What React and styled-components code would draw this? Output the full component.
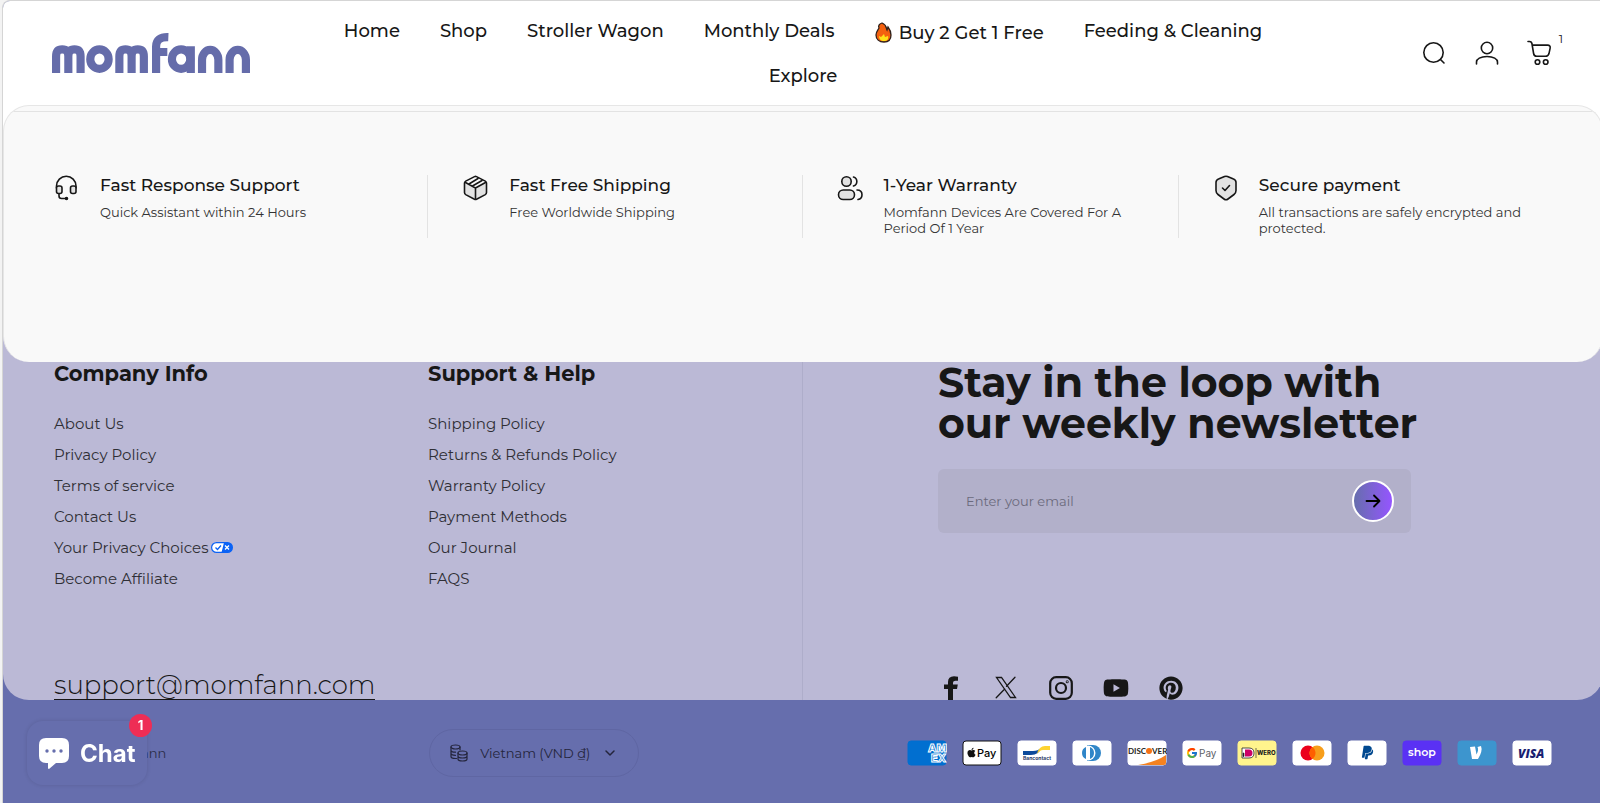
import styled, { createGlobalStyle } from "styled-components"
import { FaPinterest, FaYoutube, FaApple, FaPaypal } from "react-icons/fa"
import { FcGoogle } from "react-icons/fc"

const GlobalStyle = createGlobalStyle`
    * {
        box-sizing: border-box;
    }
    body {
        margin: 0;
        background-color: #f3f3f3;
        color: #171717;
        font-family: Montserrat, Inter, sans-serif;
        overflow: hidden;
    }
    a {
        color: inherit;
        text-decoration: none;
    }
    h2, h3, p, ul {
        margin: 0;
        padding: 0;
    }
    svg {
        display: block;
    }
`

const Page = styled.div`
    margin: 0 -3px 0 2px;
    border-top: 1px solid #d5d5d5;
    border-left: 1px solid #d5d5d5;
    border-top-left-radius: 8px;
    background-color: #666ead;
    min-height: 100vh;
    overflow: hidden;
`

const HeaderBar = styled.header`
    display: grid;
    grid-template-columns: 1fr 1000px 1fr;
    align-items: center;
    height: 104px;
    padding: 0 49px;
    background-color: white;
`

const Logo = styled.a`
    svg {
        width: 198px;
        height: 42px;
    }
`

const Nav = styled.nav`
    display: flex;
    flex-wrap: wrap;
    justify-content: center;
    align-items: flex-start;
    column-gap: 40px;
    row-gap: 17px;
`

const NavLink = styled.a`
    display: flex;
    align-items: center;
    gap: 7px;
    font-size: 18px;
    font-weight: 500;
    line-height: ${props => props.$tall ? "28px" : "24px"};
`

const Actions = styled.div`
    display: flex;
    justify-content: flex-end;
    gap: 25px;
`

const IconButton = styled.button`
    position: relative;
    display: flex;
    padding: 0;
    border: 0;
    background: none;
    color: #171717;
    cursor: pointer;
`

const CartCount = styled.span`
    position: absolute;
    top: -8px;
    right: -9px;
    font-family: Montserrat, Inter, sans-serif;
    font-size: 12px;
`

const Main = styled.main`
    background: linear-gradient(white 60px, #bbb9d6 60px);
    border-radius: 0 0 26px 26px;
    overflow: hidden;
`

const Perks = styled.section`
    height: 257px;
    padding-top: 5px;
    background-color: #f9f9f9;
    border: 1px solid #e6e6e6;
    border-bottom: 0;
    border-radius: 26px;
    overflow: hidden;
`

const PerkGrid = styled.ul`
    display: grid;
    grid-template-columns: 375fr 375fr 375fr 376fr;
    padding: 63px 48px 0;
    border-top: 1px solid #e3e3e3;
    list-style: none;
`

const Perk = styled.li`
    display: flex;
    gap: 20px;
    height: 63px;
    padding-left: ${props => props.$first ? "0" : "34px"};
    border-left: ${props => props.$first ? "0" : "1px solid #e3e3e3"};
`

const PerkTitle = styled.h3`
    margin-bottom: 8px;
    font-size: 17px;
    font-weight: 500;
    line-height: 21px;
`

const PerkText = styled.p`
    max-width: 270px;
    font-size: 13px;
    line-height: 16px;
    color: #333;
`

const FooterTop = styled.div`
    display: grid;
    grid-template-columns: 1fr 1fr;
    height: 338px;
`

const FooterLeft = styled.div`
    display: flex;
    flex-direction: column;
    justify-content: space-between;
    padding-left: 51px;
    border-right: 1px solid #aeadca;
`

const LinkColumns = styled.div`
    display: grid;
    grid-template-columns: 1fr 1fr;
`

const ColumnTitle = styled.h2`
    margin-bottom: 22px;
    font-size: 21px;
    font-weight: 700;
    line-height: 24px;
`

const LinkList = styled.ul`
    list-style: none;
`

const LinkItem = styled.li`
    font-size: 15px;
    line-height: 31px;
    color: #2f2f35;
    a {
        display: flex;
        align-items: center;
        gap: 3px;
    }
`

const Mail = styled.a`
    align-self: flex-start;
    font-size: 26px;
    line-height: 28px;
    font-weight: 300;
    border-bottom: 1px solid #171717;
`

const FooterRight = styled.div`
    display: flex;
    flex-direction: column;
    justify-content: space-between;
    padding-left: 135px;
`

const NewsTitle = styled.h2`
    font-size: 41px;
    font-weight: 700;
    line-height: 41px;
`

const NewsForm = styled.form`
    display: flex;
    align-items: center;
    width: 473px;
    height: 64px;
    margin-top: 25px;
    padding: 0 17px 0 28px;
    background-color: #b2b0ca;
    border-radius: 6px;
`

const EmailInput = styled.input`
    flex: 1;
    padding: 0;
    border: 0;
    outline: 0;
    background: none;
    font-family: inherit;
    font-size: 13px;
    &::placeholder {
        color: #6b6a7c;
    }
`

const SendButton = styled.button`
    display: flex;
    align-items: center;
    justify-content: center;
    width: 42px;
    height: 42px;
    padding: 0;
    border: 2px solid white;
    border-radius: 50%;
    background: linear-gradient(90deg, #666ead, #9555ff);
    color: black;
    cursor: pointer;
`

const Socials = styled.div`
    display: flex;
    gap: 29px;
    a {
        display: flex;
        align-items: center;
        justify-content: center;
        width: 26px;
        height: 25px;
    }
`

const FooterBottom = styled.footer`
    display: grid;
    grid-template-columns: 377fr 375fr 750fr;
    align-items: center;
    height: 106px;
    padding: 0 51px 0 50px;
    background-color: #666ead;
`

const Copyright = styled.p`
    font-size: 13px;
    color: #2b2d48;
`

const Region = styled.button`
    display: flex;
    align-items: center;
    justify-self: start;
    gap: 12px;
    height: 48px;
    padding: 0 20px;
    border: 1px solid #5f66a3;
    border-radius: 24px;
    background: none;
    font-family: inherit;
    font-size: 13px;
    color: #24253c;
    cursor: pointer;
`

const Payments = styled.ul`
    display: flex;
    justify-content: flex-end;
    gap: 15px;
    list-style: none;
`

const Card = styled.li`
    > svg {
        width: 40px;
        height: 26px;
    }
`

const ChatButton = styled.button`
    position: fixed;
    left: 27px;
    bottom: 18px;
    display: flex;
    align-items: center;
    gap: 10px;
    width: 120px;
    height: 64px;
    padding: 0 11px;
    border: 0;
    border-radius: 16px;
    background-color: #666ead;
    box-shadow: 0 0 4px rgba(0, 0, 0, 0.12);
    color: white;
    font-family: Inter, sans-serif;
    font-size: 24px;
    font-weight: 700;
    cursor: pointer;
`

const ChatBadge = styled.span`
    position: absolute;
    top: -7px;
    right: -5px;
    width: 23px;
    height: 23px;
    border-radius: 50%;
    background-color: #ee2d55;
    font-size: 13px;
    line-height: 23px;
    text-align: center;
`

const line = { fill: "none", stroke: "currentColor", strokeLinecap: "round", strokeLinejoin: "round" }

// wordmark drawn as thick strokes
function Wordmark() {
    return (
        <svg viewBox="1 0 194 41" preserveAspectRatio="none" role="img" aria-label="momfann" fill="none" stroke="#656caa" strokeWidth="8">
            <path d="M5 40V24q0-7 6-7t6 7V40M17 24q0-7 6-7t6 7V40" />
            <ellipse cx="47.500" cy="26.500" rx="9" ry="9.500" />
            <path d="M67 40V24q0-7 6-7t6 7V40M79 24q0-7 6-7t6 7V40" />
            <path d="M103 40V14q0-9.500 12-9M103 19.500H114" />
            <ellipse cx="127.500" cy="26.500" rx="9" ry="9.500" />
            <path d="M137 14V40M148 40V27a8 9.500 0 0 1 16 0V40M175 40V27a8 9.500 0 0 1 16 0V40" />
        </svg>
    )
}

function Flame() {
    return (
        <svg width="17" height="21" viewBox="0 0 17 21">
            <path d="M7 1c5 2 4 5 5 7l1-3c3 4 3 6 3 8 0 5-3 7-7 7-5 0-8-3-8-7 0-3 2-5 3-7C3 4 4 2 7 1z" fill="#f4610f" stroke="#30221c" strokeWidth="1.3" />
            <path d="M4 14l2 1 3-3 1 3 3-1c1 3-1 5-4 5s-5-2-5-5z" fill="#ffe119" />
        </svg>
    )
}

function SearchIcon() {
    return (
        <svg width="28" height="28" viewBox="0 0 28 28" {...line} strokeWidth="1.6">
            <circle cx="13.5" cy="13.5" r="9.7" />
            <path d="M20.500 20.500L24 24" />
        </svg>
    )
}

function UserIcon() {
    return (
        <svg width="28" height="28" viewBox="0 0 28 28" {...line} strokeWidth="1.6">
            <circle cx="14" cy="9" r="5.7" />
            <path d="M3.500 25v-2c0-3 4-5.500 10.500-5.500s10.500 2.500 10.500 5.500v2" />
        </svg>
    )
}

function CartIcon() {
    return (
        <svg width="28" height="28" viewBox="0 0 28 28" {...line} strokeWidth="1.6">
            <path d="M2 2.500h1.500c1.500 0 2.300 1 2.500 2.500l1.600 9.500c.3 2 1.400 2.800 3 2.800h8.900c1.800 0 2.900-.8 3.400-2.500l1.200-5.500c.5-2-.5-3.200-2.500-3.200H6.500" />
            <circle cx="11.500" cy="23" r="2.300" />
            <circle cx="19.700" cy="23" r="2.300" />
        </svg>
    )
}

function HeadsetIcon() {
    return (
        <svg width="28" height="26" viewBox="0 0 28 26" {...line} strokeWidth="1.6">
            <path d="M4.500 13v-2A9.500 9.500 0 0 1 24 11v2" />
            <rect x="4.500" y="11" width="5.500" height="7.500" rx="2" fill="#e2e2e2" />
            <rect x="18.500" y="11" width="5.500" height="7.500" rx="2" fill="#e2e2e2" />
            <path d="M7 19v2c0 1.500 1 2.500 2.500 2.500h5" />
            <circle cx="14.500" cy="23.500" r="1" />
        </svg>
    )
}

function BoxIcon() {
    return (
        <svg width="27" height="26" viewBox="0 0 27 26" {...line} strokeWidth="1.6">
            <path d="M2.500 7.500L13.500 13l11-5.500V18l-11 6-11-6z" fill="#e2e2e2" stroke="none" />
            <path d="M12.500 1.600q1-.5 2 0l8.800 4.500q1.200.7 1.200 2v9.500q0 1.300-1.200 2l-8.800 4.700q-1 .5-2 0l-8.800-4.700q-1.200-.7-1.200-2V8.100q0-1.300 1.200-2z" />
            <path d="M3.500 7.500l10 5.500 10-5.500M13.500 13v11M7 9l9-5.500M10.500 11l9.500-5.500" />
        </svg>
    )
}

function PeopleIcon() {
    return (
        <svg width="26" height="26" viewBox="0 0 26 26" {...line} strokeWidth="1.6">
            <circle cx="9.500" cy="6.500" r="4.700" fill="#e2e2e2" />
            <rect x="1.500" y="15" width="16" height="9.500" rx="4.700" fill="#e2e2e2" />
            <path d="M16.500 2a4.700 4.700 0 0 1 0 9M20 15c3.500 0 5 2 5 4.700s-1.500 4.300-4 4.800" />
        </svg>
    )
}

function ShieldIcon() {
    return (
        <svg width="26" height="26" viewBox="0 0 26 26" {...line} strokeWidth="1.6">
            <path d="M11.500 1.500q1.500-.6 3 0l6 2.600q2.500 1 2.500 3.400v8q0 2.500-2 4l-6 4.500q-2 1.500-4 0l-6-4.500q-2-1.500-2-4v-8q0-2.400 2.500-3.400z" fill="#e2e2e2" />
            <path d="M9.500 13l2.500 2.500 4.500-5" />
        </svg>
    )
}

function PrivacyIcon() {
    return (
        <svg width="22" height="11" viewBox="0 0 22 11" fill="none">
            <rect x=".6" y=".6" width="20.800" height="9.800" rx="4.900" fill="white" stroke="#0b62f5" strokeWidth="1.200" />
            <path d="M13 .6h3.500a4.900 4.900 0 0 1 0 9.800H10.500z" fill="#0b62f5" />
            <path d="M4.500 5.500l2 2L10 3.500" stroke="#0b62f5" strokeWidth="1.300" />
            <path d="M14 3.500l4 4M18 3.500l-4 4" stroke="white" strokeWidth="1.300" />
        </svg>
    )
}

function ArrowIcon() {
    return (
        <svg width="16" height="14" viewBox="0 0 16 14" {...line} strokeWidth="1.800">
            <path d="M1.500 7h13M9 1.500L14.500 7 9 12.500" />
        </svg>
    )
}

function FacebookIcon() {
    return (
        <svg width="16" height="24" viewBox="0 0 16 24" fill="currentColor">
            <path d="M5 24V13H1V8.500h4V6q0-5.500 6-5.700 2.500 0 4 .4v4h-2.500q-2.500 0-2.500 2v1.800h4.800L14 13h-4v11z" />
        </svg>
    )
}

function XIcon() {
    return (
        <svg width="22" height="23" viewBox="0 0 22 23" {...line} strokeLinejoin="miter" strokeWidth="1.300">
            <path d="M1.500 1.500h5l14 20h-5zM20 1.200l-8.500 9M1.200 21.800L9.700 13" />
        </svg>
    )
}

function InstagramIcon() {
    return (
        <svg width="24" height="24" viewBox="0 0 24 24" {...line} strokeWidth="2.200">
            <rect x="1.200" y="1.200" width="21.600" height="21.600" rx="6" />
            <circle cx="12" cy="12" r="5" />
            <circle cx="18.200" cy="5.800" r=".4" />
        </svg>
    )
}

function CoinsIcon() {
    return (
        <svg width="18" height="18" viewBox="0 0 18 18" {...line} strokeWidth="1.200">
            <ellipse cx="5.500" cy="3" rx="4.500" ry="2" />
            <path d="M1 3v9.500c0 1.200 2 2 4.500 2h1M10 3v3M1 6.200c0 1.200 2 2 4.500 2M1 9.300c0 1.200 2 2 4.500 2" />
            <ellipse cx="12.500" cy="9" rx="4.500" ry="2" />
            <path d="M8 9v6c0 1.200 2 2 4.500 2s4.500-.8 4.500-2V9M8 12c0 1.200 2 2 4.500 2s4.500-.8 4.500-2" />
        </svg>
    )
}

function ChevronIcon() {
    return (
        <svg width="16" height="10" viewBox="0 0 16 10" {...line} strokeWidth="1.500">
            <path d="M4 3l4 4 4-4" />
        </svg>
    )
}

function ChatIcon() {
    return (
        <svg width="32" height="32" viewBox="0 0 32 32" fill="white">
            <path d="M8 1h16q7 0 7 7v11q0 7-7 7h-6l-7 6q-1 0-1-1v-5H8q-7 0-7-7V8q0-7 7-7z" />
            <g fill="#666ead">
                <circle cx="9" cy="14" r="1.700" />
                <circle cx="16" cy="14" r="1.700" />
                <circle cx="23" cy="14" r="1.700" />
            </g>
        </svg>
    )
}

const cards = [
    {
        name: "American Express", bg: "#016fd0",
        art: (
            <g fill="#016fd0" stroke="white" strokeWidth="1" fontFamily="Inter, sans-serif" fontSize="11" fontWeight="800">
                <text x="21" y="12">AM</text>
                <text x="24" y="22">EX</text>
            </g>
        ),
    },
    {
        name: "Apple Pay", bg: "white", stroke: "#111",
        art: (
            <>
                <FaApple x="4" y="7" size={11} color="#111" />
                <text x="15" y="17" fontFamily="Inter, sans-serif" fontSize="11" fontWeight="500">Pay</text>
            </>
        ),
    },
    {
        name: "Bancontact", bg: "white",
        art: (
            <>
                <path d="M6 15v-4h10q5 0 8-3v0q-2 7-10 7z" fill="#0d4b9b" />
                <path d="M33 6v4H26q-3 0-6 4 2-8 8-8z" fill="#fed330" />
                <text x="6" y="20" fontFamily="Inter, sans-serif" fontSize="5" fontWeight="700" fill="#1e3764">Bancontact</text>
            </>
        ),
    },
    {
        name: "Diners Club", bg: "white",
        art: (
            <>
                <path d="M15 5h6a8 8 0 0 1 0 16h-6z" fill="#3086c8" />
                <circle cx="16" cy="13" r="7.500" fill="white" />
                <path d="M14 7a6.500 6.500 0 0 0 0 12zM18 7a6.500 6.500 0 0 1 0 12z" fill="#3086c8" />
            </>
        ),
    },
    {
        name: "Discover", bg: "white",
        art: (
            <>
                <path d="M39 15v8q0 2-2 2H11q18-3 28-10z" fill="#f58220" />
                <text x="1" y="14" fontFamily="Lato, sans-serif" fontSize="8" fontWeight="700" fill="#231f20">DISC</text>
                <circle cx="22" cy="11" r="3" fill="#f47216" />
                <text x="25" y="14" fontFamily="Lato, sans-serif" fontSize="8" fontWeight="700" fill="#231f20">VER</text>
            </>
        ),
    },
    {
        name: "Google Pay", bg: "white",
        art: (
            <>
                <FcGoogle x="4" y="7" size={12} />
                <text x="17" y="17" fontFamily="Inter, sans-serif" fontSize="10" fill="#5f6368">Pay</text>
            </>
        ),
    },
    {
        name: "iDEAL Wero", bg: "#fff48d",
        art: (
            <>
                <path d="M5 8h7q5 0 5 5t-5 5H5z" fill="white" stroke="#222" strokeWidth=".8" />
                <path d="M8 9.500h4q3.500 0 3.500 3.500T12 16.500H8z" fill="#cc0066" />
                <path d="M6 13h1v3.500H6zM19 8v10" stroke="#333" strokeWidth=".7" />
                <text x="20" y="15" fontFamily="Inter, sans-serif" fontSize="6" fontWeight="800" fill="#1d1c1c">WERO</text>
            </>
        ),
    },
    {
        name: "Mastercard", bg: "white",
        art: (
            <>
                <circle cx="16" cy="13" r="7.500" fill="#eb001b" />
                <circle cx="25" cy="13" r="7.500" fill="#f79e1b" />
                <path d="M20.500 7a7.500 7.500 0 0 1 0 12 7.500 7.500 0 0 1 0-12z" fill="#ff5f00" />
            </>
        ),
    },
    { name: "PayPal", bg: "white", art: <FaPaypal x="13" y="5" size={15} color="#00488f" /> },
    {
        name: "Shop Pay", bg: "#5a31f4",
        art: <text x="6" y="16" fontFamily="Montserrat, Inter, sans-serif" fontSize="11" fontWeight="600" fill="white">shop</text>,
    },
    {
        name: "Venmo", bg: "#3d95ce",
        art: <path d="M24 6q2 5-3 13h-6L13 7l5-.5 1.500 8Q22 10 20.500 7z" fill="white" />,
    },
    {
        name: "Visa", bg: "white",
        art: <text x="6" y="18" fontFamily="Open Sans, sans-serif" fontSize="12" fontWeight="800" fontStyle="italic" fill="#1a1f71">VISA</text>,
    },
]

const perks = [
    { icon: <HeadsetIcon />, title: "Fast Response Support", text: "Quick Assistant within 24 Hours" },
    { icon: <BoxIcon />, title: "Fast Free Shipping", text: "Free Worldwide Shipping" },
    { icon: <PeopleIcon />, title: "1-Year Warranty", text: "Momfann Devices Are Covered For A Period Of 1 Year" },
    { icon: <ShieldIcon />, title: "Secure payment", text: "All transactions are safely encrypted and protected." },
]

const columns = [
    { title: "Company Info", links: ["About Us", "Privacy Policy", "Terms of service", "Contact Us", "Your Privacy Choices", "Become Affiliate"] },
    { title: "Support & Help", links: ["Shipping Policy", "Returns & Refunds Policy", "Warranty Policy", "Payment Methods", "Our Journal", "FAQS"] },
]

const socials = [
    { name: "Facebook", icon: <FacebookIcon /> },
    { name: "X", icon: <XIcon /> },
    { name: "Instagram", icon: <InstagramIcon /> },
    { name: "YouTube", icon: <FaYoutube size={26} /> },
    { name: "Pinterest", icon: <FaPinterest size={24} /> },
]

function Header() {
    return (
        <HeaderBar>
            <Logo href="#"><Wordmark /></Logo>
            <Nav>
                <NavLink href="#">Home</NavLink>
                <NavLink href="#">Shop</NavLink>
                <NavLink href="#">Stroller Wagon</NavLink>
                <NavLink href="#">Monthly Deals</NavLink>
                <NavLink href="#" $tall><Flame />Buy 2 Get 1 Free</NavLink>
                <NavLink href="#">Feeding &amp; Cleaning</NavLink>
                <NavLink href="#">Explore</NavLink>
            </Nav>
            <Actions>
                <IconButton aria-label="Search"><SearchIcon /></IconButton>
                <IconButton aria-label="Account"><UserIcon /></IconButton>
                <IconButton aria-label="Cart"><CartIcon /><CartCount>1</CartCount></IconButton>
            </Actions>
        </HeaderBar>
    )
}

function PerkPanel() {
    return (
        <Perks>
            <PerkGrid>
                {perks.map((perk, i) => (
                    <Perk key={perk.title} $first={i === 0}>
                        {perk.icon}
                        <div>
                            <PerkTitle>{perk.title}</PerkTitle>
                            <PerkText>{perk.text}</PerkText>
                        </div>
                    </Perk>
                ))}
            </PerkGrid>
        </Perks>
    )
}

function FooterLinks() {
    return (
        <FooterLeft>
            <LinkColumns>
                {columns.map(column => (
                    <div key={column.title}>
                        <ColumnTitle>{column.title}</ColumnTitle>
                        <LinkList>
                            {column.links.map(link => (
                                <LinkItem key={link}>
                                    <a href="#">{link}{link === "Your Privacy Choices" && <PrivacyIcon />}</a>
                                </LinkItem>
                            ))}
                        </LinkList>
                    </div>
                ))}
            </LinkColumns>
            <Mail href="mailto:support@momfann.com">support@momfann.com</Mail>
        </FooterLeft>
    )
}

function Newsletter() {
    return (
        <FooterRight>
            <div>
                <NewsTitle>Stay in the loop with<br />our weekly newsletter</NewsTitle>
                <NewsForm onSubmit={e => e.preventDefault()}>
                    <EmailInput type="email" placeholder="Enter your email" aria-label="Enter your email" />
                    <SendButton aria-label="Subscribe"><ArrowIcon /></SendButton>
                </NewsForm>
            </div>
            <Socials>
                {socials.map(social => <a key={social.name} href="#" aria-label={social.name}>{social.icon}</a>)}
            </Socials>
        </FooterRight>
    )
}

export default function App() {
    return (
        <>
            <GlobalStyle />
            <Page>
                <Header />
                <Main>
                    <PerkPanel />
                    <FooterTop>
                        <FooterLinks />
                        <Newsletter />
                    </FooterTop>
                </Main>
                <FooterBottom>
                    <Copyright>© 2025 momfann</Copyright>
                    <Region><CoinsIcon />Vietnam (VND ₫)<ChevronIcon /></Region>
                    <Payments>
                        {cards.map(card => (
                            <Card key={card.name}>
                                <svg viewBox="0 0 40 26" role="img" aria-label={card.name}>
                                    <rect x="1" y="1" width="38" height="24" rx="3" fill={card.bg} stroke={card.stroke || card.bg} />
                                    {card.art}
                                </svg>
                            </Card>
                        ))}
                    </Payments>
                </FooterBottom>
                <ChatButton><ChatIcon />Chat<ChatBadge>1</ChatBadge></ChatButton>
            </Page>
        </>
    )
}
